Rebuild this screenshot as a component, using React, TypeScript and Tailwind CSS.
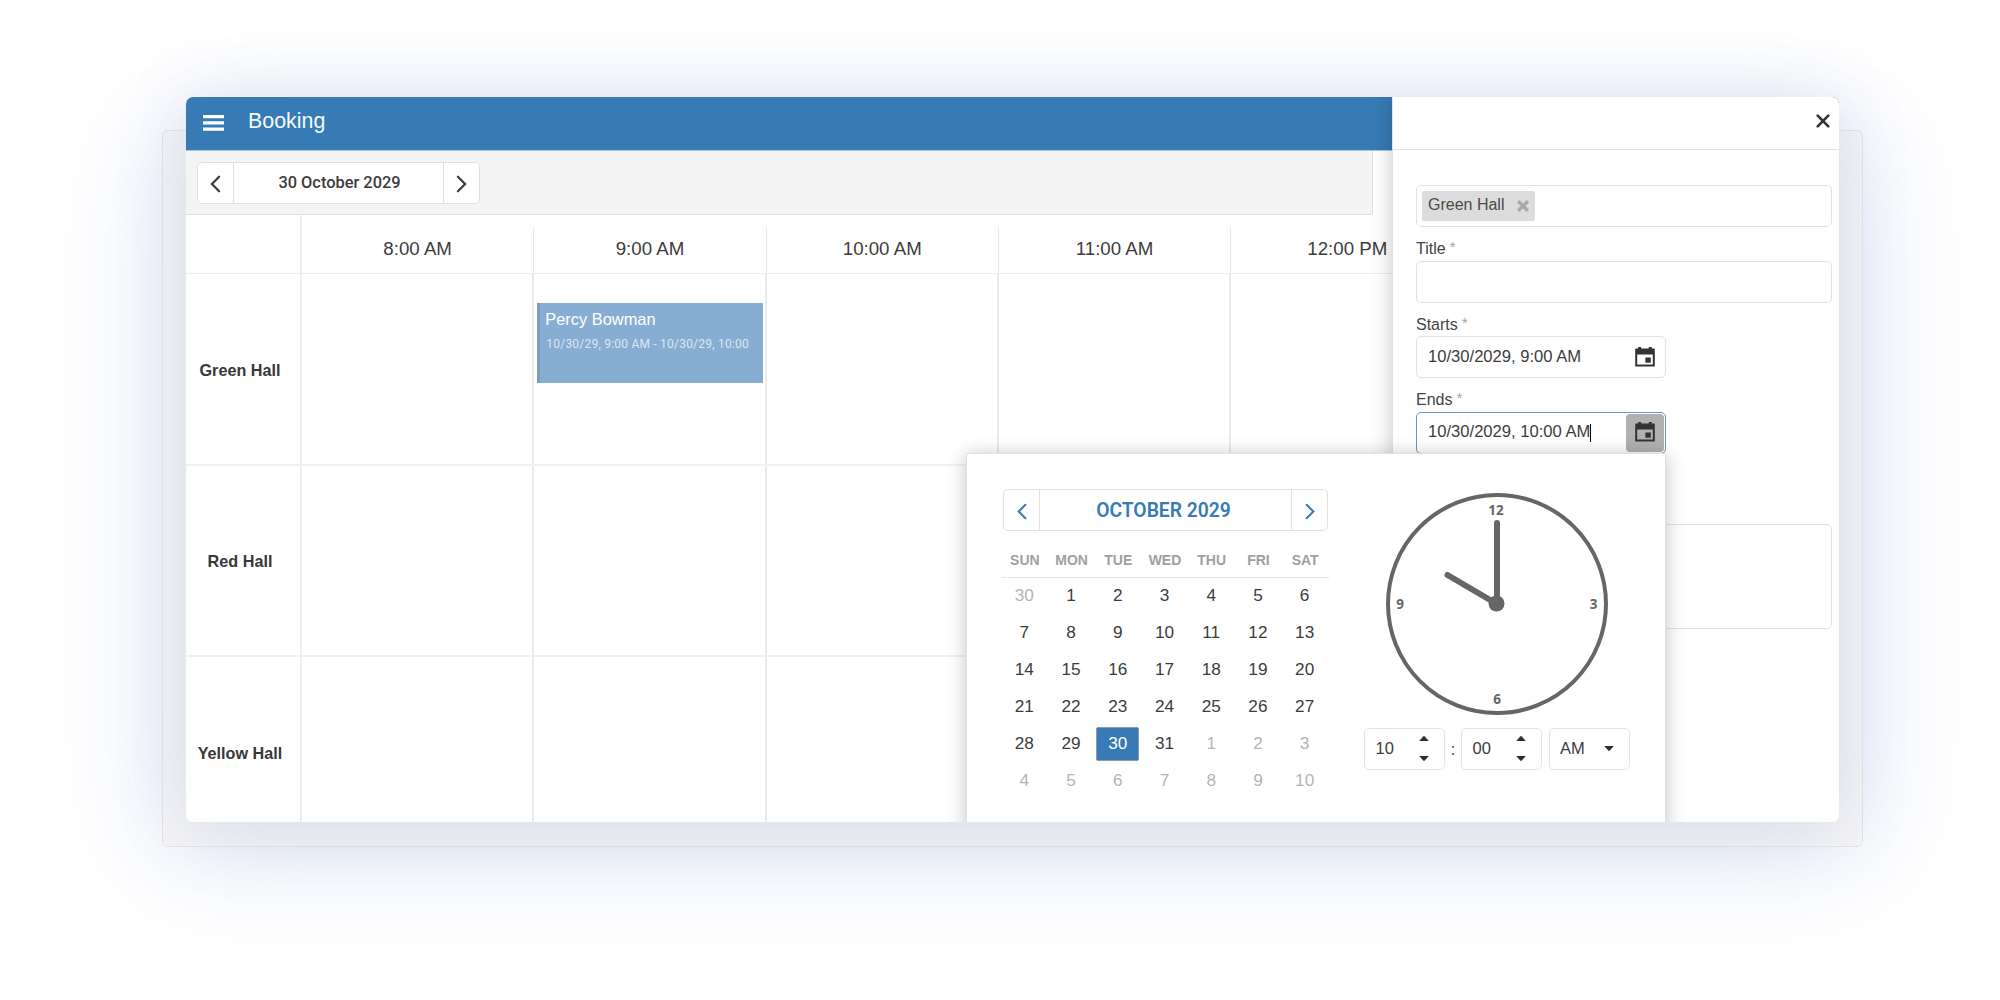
import { useState } from 'react';

const HOURS = ['8:00 AM', '9:00 AM', '10:00 AM', '11:00 AM', '12:00 PM'];
const HALLS = ['Green Hall', 'Red Hall', 'Yellow Hall'];
const WEEKDAYS = ['SUN', 'MON', 'TUE', 'WED', 'THU', 'FRI', 'SAT'];

type Day = { day: number; outside: boolean };

// 30 September, the 31 days of October, then 1-10 November
const DAYS: Day[] = [
  { day: 30, outside: true },
  ...Array.from({ length: 31 }, (_, i) => ({ day: i + 1, outside: false })),
  ...Array.from({ length: 10 }, (_, i) => ({ day: i + 1, outside: true })),
];

const Chevron = ({ left, className }: { left?: boolean; className: string }) => (
  <svg viewBox="0 0 12 20" fill="none" stroke="currentColor" strokeWidth={2.5} strokeLinecap="round" className={className}>
    {left ? <path d="M10 2L2 10l8 8" /> : <path d="M2 2l8 8-8 8" />}
  </svg>
);

const CalendarIcon = () => (
  <svg viewBox="0 0 20 20" fill="#333" className="h-5 w-5">
    <path
      fillRule="evenodd"
      d="M3.2 0h3v1.4h7.6V0h3v1.4h2.5q.5 0 .5.5v17.1q0 .5-.5.5H.7q-.5 0-.5-.5V1.9q0-.5.5-.5h2.5zM2.2 7.6v10h15.6v-10z"
    />
    <path d="M10.4 10.5h5.4v5.2h-5.4z" />
  </svg>
);

const Caret = ({ up }: { up?: boolean }) => (
  <svg viewBox="0 0 10 5" fill="#2f2f2f" className="h-[5px] w-2.5">
    {up ? <path d="M.2 5L4.2.5Q5-.3 5.8.5L9.8 5z" /> : <path d="M.2 0L4.2 4.5Q5 5.3 5.8 4.5L9.8 0z" />}
  </svg>
);

const Label = ({ text }: { text: string }) => (
  <div className="flex h-[33.5px] items-center pt-[11px] text-base text-[#444]">
    {text}
    <span className="ml-1 pb-1 text-[15px] text-[#a5a5a5]">*</span>
  </div>
);

const DateInput = ({ value, active }: { value: string; active?: boolean }) => (
  <div
    className={`flex h-[42px] w-[249.5px] items-center rounded-[5px] border bg-white pl-[11px] ${
      active ? 'border-[#5b9bd0]' : 'border-[#e2e2e2]'
    }`}
  >
    <span className="text-[16.6px] text-[#3c3c3c]">{value}</span>
    {active && <span className="h-[18px] w-px bg-black" />}
    <span
      className={`mr-px ml-auto flex h-[38px] w-[38px] items-center justify-center rounded-[4px] pb-px ${
        active ? 'bg-[#b1b1b1]' : ''
      }`}
    >
      <CalendarIcon />
    </span>
  </div>
);

const Spinner = ({ value }: { value: string }) => (
  <div className="flex h-[42px] w-[81px] items-center justify-between rounded-[5px] border border-[#e4e4e4] pr-[15px] pb-px pl-[10.5px]">
    <span className="text-[16.5px]">{value}</span>
    <div className="flex flex-col gap-[14.5px]">
      <Caret up />
      <Caret />
    </div>
  </div>
);

const Schedule = () => (
  <div className="flex flex-1 flex-col">
    <div className="flex h-[59px] shrink-0 border-b border-[#ececec]">
      <div className="w-[116px] shrink-0 border-r-2 border-[#efefef]" />
      {HOURS.map((hour, i) => (
        <div
          key={hour}
          className={`mt-3 flex w-[232.3px] shrink-0 items-center justify-center pb-px text-[18.7px] text-[#3c3c3c] ${
            i < HOURS.length - 1 ? 'border-r border-[#e8e8e8]' : ''
          }`}
        >
          {hour}
        </div>
      ))}
    </div>
    {HALLS.map((hall) => (
      <div key={hall} className="flex h-[191.6px] shrink-0 border-b-2 border-[#f1f1f1]">
        <div className="flex w-[116px] shrink-0 items-center justify-center border-r-2 border-[#efefef] pt-0.5 pr-1.5 text-[16.2px] font-bold text-[#383838]">
          {hall}
        </div>
        {HOURS.map((hour) => (
          <div key={hour} className="w-[232.3px] shrink-0 border-r-2 border-[#ebebeb] pt-[29px] pl-[3px]">
            {hall === 'Green Hall' && hour === '9:00 AM' && (
              <div className="h-20 w-[226px] overflow-hidden border-l-3 border-[#7c9cbb] bg-[#87add2] pt-[6px] pl-[5px] whitespace-nowrap">
                <p className="text-[16.4px] leading-5 text-white">Percy Bowman</p>
                <p className="mt-[6px] pl-px font-['Roboto'] text-[12px] leading-[18px] tracking-[0.22px] text-[#dbe7f2]">
                  10/30/29, 9:00 AM - 10/30/29, 10:00
                </p>
              </div>
            )}
          </div>
        ))}
      </div>
    ))}
  </div>
);

const BookingForm = () => (
  <aside className="absolute inset-y-0 right-0 w-[447px] border-l border-[#e2e2e2] bg-white shadow-[0_0_20px_rgba(0,0,0,0.22)]">
    <div className="flex h-[53px] items-center justify-end border-b border-[#e4e4e4] pr-[9px] pb-[5px]">
      <svg viewBox="0 0 14 14" stroke="#333" strokeWidth={2.6} strokeLinecap="round" className="h-3.5 w-3.5">
        <path d="M1.7 1.7l10.6 10.6M12.3 1.7L1.7 12.3" />
      </svg>
    </div>
    <div className="pt-[35px] pr-[7px] pl-[23px]">
      <div className="flex h-[42px] items-center rounded-[5px] border border-[#e2e2e2] pb-px pl-[5px]">
        <span className="flex h-[30px] w-[113px] items-center justify-between rounded-[2px] bg-[#dcdcdc] pr-[6px] pb-px pl-[6px] text-base text-[#4a4a4a]">
          Green Hall
          <svg viewBox="0 0 12 12" stroke="#a9a9a9" strokeWidth={3.4} className="mt-0.5 h-3 w-3">
            <path d="M1.2 1.2l9.6 9.6M10.8 1.2l-9.6 9.6" />
          </svg>
        </span>
      </div>
      <Label text="Title" />
      <div className="h-[42px] rounded-[5px] border border-[#e2e2e2]" />
      <Label text="Starts" />
      <DateInput value="10/30/2029, 9:00 AM" />
      <Label text="Ends" />
      <DateInput value="10/30/2029, 10:00 AM" active />
      <div className="mt-[70px] h-[105px] rounded-[5px] border border-[#e2e2e2]" />
    </div>
  </aside>
);

const Clock = () => (
  <svg viewBox="0 0 224 224" className="h-56 w-56">
    <circle cx="112" cy="112" r="109" fill="none" stroke="#666" strokeWidth="4" />
    <g stroke="#666" strokeWidth="6" strokeLinecap="round">
      <path d="M112 112V31" />
      <path d="M112 112L62.5 83" />
    </g>
    <circle cx="111.5" cy="111.5" r="8" fill="#666" />
    <g fill="#666" textAnchor="middle" className="font-['Open_Sans'] text-[13.5px] font-bold">
      <text x="111" y="23">12</text>
      <text x="208.5" y="117">3</text>
      <text x="112" y="212">6</text>
      <text x="15" y="117">9</text>
    </g>
  </svg>
);

const DateTimePicker = () => {
  const [selected, setSelected] = useState(30);

  return (
    <div className="absolute top-[356px] left-[780px] flex h-[380px] w-[699.5px] border border-[#e0e0e0] bg-white text-[#3c3c3c] shadow-[0_2px_18px_rgba(0,0,0,0.24)]">
      <div className="ml-[35px] w-[327px] pt-[35px]">
        <div className="ml-px flex h-[42px] w-[325px] rounded-[5px] border border-[#e2e2e2] text-[#367bb5]">
          <button className="flex w-9 items-center justify-center border-r border-[#e2e2e2]">
            <Chevron left className="mt-0.5 h-[17px] w-2.5" />
          </button>
          <div className="flex flex-1 items-center justify-center pt-0.5 pr-1 font-['Roboto'] text-[19.3px] font-semibold">
            OCTOBER 2029
          </div>
          <button className="flex w-9 items-center justify-center border-l border-[#e2e2e2]">
            <Chevron className="mt-0.5 h-[17px] w-2.5" />
          </button>
        </div>
        <div className="mt-3 grid h-[35px] grid-cols-7 items-center border-b border-[#e4e4e4] text-center text-[14px] font-bold text-[#a0a0a0]">
          {WEEKDAYS.map((name) => (
            <span key={name} className="pr-px">
              {name}
            </span>
          ))}
        </div>
        <div className="-mt-px mr-px -ml-px grid grid-cols-7">
          {DAYS.map(({ day, outside }, i) => (
            <button
              key={i}
              onClick={() => !outside && setSelected(day)}
              className={`mx-auto my-[1.5px] flex h-[34px] w-[43px] items-center justify-center rounded-[2px] border text-[17.2px] ${
                outside
                  ? 'border-transparent text-[#b4b4b4]'
                  : day === selected
                    ? 'border-[#8b9aa8] bg-[#367bb5] text-white'
                    : 'border-transparent'
              }`}
            >
              {day}
            </button>
          ))}
        </div>
      </div>
      <div className="ml-[34px] flex w-[268px] flex-col items-center pt-[38px]">
        <Clock />
        <div className="mt-[12px] flex items-center text-[16.5px]">
          <Spinner value="10" />
          <span className="w-4 text-center">:</span>
          <Spinner value="00" />
          <div className="ml-[7px] flex h-[42px] w-[81px] items-center justify-between rounded-[5px] border border-[#e4e4e4] pr-[15px] pb-px pl-2.5">
            AM
            <Caret />
          </div>
        </div>
      </div>
    </div>
  );
};

export default function App() {
  return (
    <div className="flex h-[1000px] w-[2000px] items-start overflow-hidden bg-white pt-[130px] pl-[162px] font-['Liberation_Sans',sans-serif]">
      <div className="flex h-[717px] w-[1701px] items-start rounded-[6px] border border-[#e5e5e9] bg-[#f5f5f6] shadow-[0_2px_120px_rgba(100,130,205,0.2)]">
        <div className="relative -mt-[34px] ml-[23px] flex h-[725px] w-[1653px] shrink-0 rounded-[7px] shadow-[0_8px_70px_rgba(90,110,185,0.2)]">
          <div className="relative flex flex-1 flex-col overflow-hidden rounded-[7px] bg-white">
            <header className="flex h-[54px] shrink-0 items-center border-b border-[#a9c6e0] bg-[#367bb5] pl-[17px]">
              <svg viewBox="0 0 21 16" fill="#fff" className="mb-px h-4 w-[21px]">
                <path d="M0 0h21v3.2H0zM0 6.3h21v3.2H0zM0 12.6h21v3.2H0z" />
              </svg>
              <h1 className="ml-[24px] pb-[5px] text-[21.4px] text-[#f4f8fb]">Booking</h1>
            </header>
            <div className="flex h-[64px] w-[1187px] shrink-0 items-center border-r border-b border-[#e0e0e0] bg-[#f4f4f4] pl-[11px]">
              <div className="flex h-[42px] w-[283px] rounded-[5px] border border-[#e0e0e0] bg-white text-[#3c3c3c]">
                <button className="flex w-9 items-center justify-center border-r border-[#e0e0e0]">
                  <Chevron left className="mt-0.5 h-[18px] w-[11px]" />
                </button>
                <div className="flex flex-1 items-center justify-center pt-0.5 pl-0.5 font-['Roboto'] text-[16.4px] font-medium">
                  30 October 2029
                </div>
                <button className="flex w-9 items-center justify-center border-l border-[#e0e0e0]">
                  <Chevron className="mt-0.5 h-[18px] w-[11px]" />
                </button>
              </div>
            </div>
            <Schedule />
            <BookingForm />
            <DateTimePicker />
          </div>
        </div>
      </div>
    </div>
  );
}
